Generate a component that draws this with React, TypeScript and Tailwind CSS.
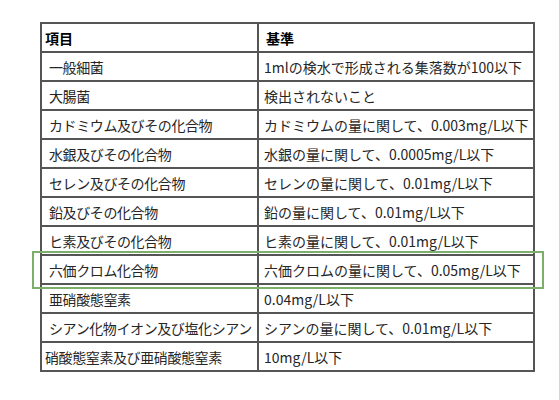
import React from "react";

type Row = { a: string; b: string; indent: boolean };

const rows: Row[] = [
  { a: "一般細菌", b: "1mlの検水で形成される集落数が100以下", indent: true },
  { a: "大腸菌", b: "検出されないこと", indent: true },
  { a: "カドミウム及びその化合物", b: "カドミウムの量に関して、0.003mg/L以下", indent: true },
  { a: "水銀及びその化合物", b: "水銀の量に関して、0.0005mg/L以下", indent: true },
  { a: "セレン及びその化合物", b: "セレンの量に関して、0.01mg/L以下", indent: true },
  { a: "鉛及びその化合物", b: "鉛の量に関して、0.01mg/L以下", indent: true },
  { a: "ヒ素及びその化合物", b: "ヒ素の量に関して、0.01mg/L以下", indent: true },
  { a: "六価クロム化合物", b: "六価クロムの量に関して、0.05mg/L以下", indent: true },
  { a: "亜硝酸態窒素", b: "0.04mg/L以下", indent: true },
  { a: "シアン化物イオン及び塩化シアン", b: "シアンの量に関して、0.01mg/L以下", indent: true },
  { a: "硝酸態窒素及び亜硝酸態窒素", b: "10mg/L以下", indent: false },
];

export default function App() {
  return (
    <div
      className="relative w-[559px] h-[400px] bg-white pt-[22px] pl-[40px] text-[#262626]"
      style={{ fontFamily: '"Noto Sans CJK JP", "Noto Sans", sans-serif' }}
    >
      <table className="border-collapse w-[495px] text-[14px] leading-none">
        <thead>
          <tr>
            <th className="border-2 border-[#555] h-[29px] w-[217px] text-left font-bold text-black pl-[3px] align-middle">
              項目
            </th>
            <th className="border-2 border-[#555] h-[29px] text-left font-bold text-black pl-[7px] align-middle">
              基準
            </th>
          </tr>
        </thead>
        <tbody>
          {rows.map((r) => (
            <tr key={r.a}>
              <td
                className={
                  "border-2 border-[#555] h-[29px] align-middle whitespace-nowrap tracking-[-0.4px] " +
                  (r.indent ? "pl-[7px]" : "pl-[3px]")
                }
              >
                {r.a}
              </td>
              <td className="border-2 border-[#555] h-[29px] align-middle whitespace-nowrap pl-[5px]">
                {r.b}
              </td>
            </tr>
          ))}
        </tbody>
      </table>
      <div className="absolute left-[32px] top-[251px] w-[512px] h-[38px] border-2 border-[#7daf6c]" />
    </div>
  );
}
